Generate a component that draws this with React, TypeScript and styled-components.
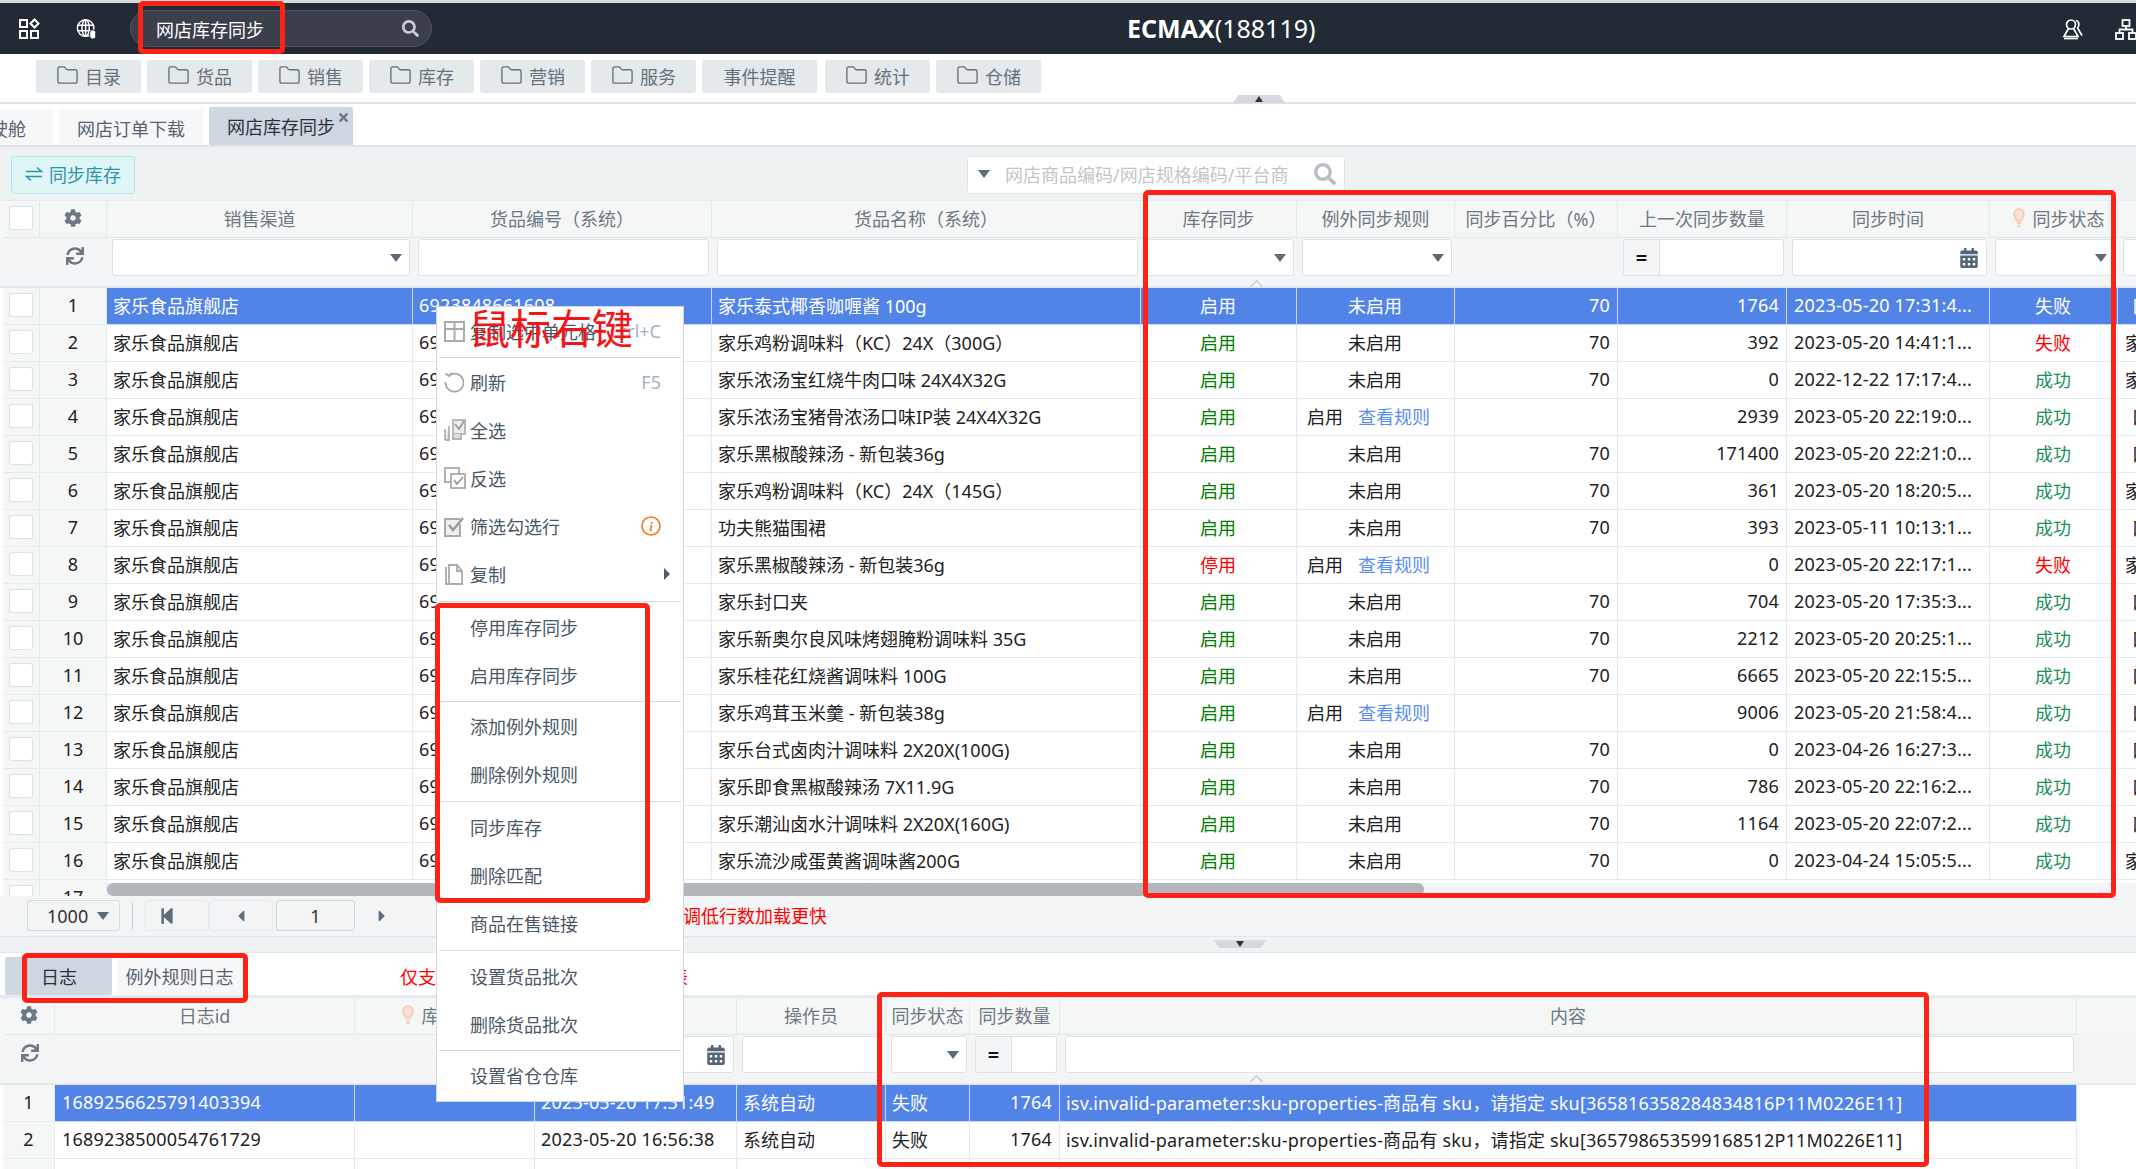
import styled, { createGlobalStyle } from "styled-components";
import { FaCog, FaSync, FaSearch, FaCalendarAlt, FaStepBackward, FaCaretLeft, FaCaretRight, FaTimes } from "react-icons/fa";
import { Folder } from "lucide-react";

const GlobalStyle = createGlobalStyle`
  html, body {
    margin: 0;
    padding: 0;
    background: #fff;
    overflow: hidden;
  }
  * {
    box-sizing: border-box;
  }
  body {
    font-family: "Noto Sans", "Noto Sans CJK SC", sans-serif;
    font-size: 18px;
    color: #222;
  }
`;

const MAIN_COLS = "37px 67px 306px 299px 429px 156px 158px 163px 169px 203px 128px 60px";
const LOG_COLS = "52px 300px 180px 202px 149px 84px 90px 1017px";

const Page = styled.div`
  position: relative;
  width: 2136px;
  height: 1169px;
  overflow: hidden;
`;

const TopBar = styled.header`
  height: 54px;
  border-top: 3px solid #d8dbdd;
  background: #222a35;
  color: #fff;
  display: flex;
  align-items: center;
  padding-left: 18px;
`;
const TopIcon = styled.div`
  width: 22px;
  height: 22px;
  margin-right: 36px;
  display: flex;
  align-items: center;
`;
const TopSearch = styled.div`
  width: 302px;
  height: 37px;
  margin-left: -4px;
  padding: 0 12px 0 25px;
  display: flex;
  align-items: center;
  justify-content: space-between;
  background: #3a3f4b;
  border: 1px solid #4d535f;
  border-radius: 19px;
  color: #c9ccd2;
`;
const TopSearchText = styled.span`
  color: #fff;
`;
const Title = styled.div`
  margin: -2px 0 0 695px;
  font-size: 25px;
  line-height: 30px;
  white-space: nowrap;
  b {
    font-weight: 700;
  }
`;
const TopRight = styled.div`
  margin-left: auto;
  display: flex;
  gap: 31px;
  margin-right: -1px;
`;

const NavBar = styled.nav`
  position: relative;
  height: 50px;
  padding: 6px 0 0 36px;
  display: flex;
  align-items: flex-start;
  gap: 6px;
  border-bottom: 2px solid #dfe4e8;
`;
const NavButton = styled.div<{ $wide?: boolean }>`
  height: 33px;
  width: ${(p) => (p.$wide ? "115px" : "105px")};
  margin-right: ${(p) => (p.$wide ? "2px" : "0")};
  padding-bottom: 2px;
  display: flex;
  align-items: center;
  justify-content: center;
  gap: 6px;
  background: #e4e9ec;
  border-radius: 3px;
  color: #66727d;
`;
const Handle = styled.div<{ $left: number; $top: number; $down?: boolean }>`
  position: absolute;
  left: ${(p) => p.$left}px;
  top: ${(p) => p.$top}px;
  width: 52px;
  height: 8px;
  background: #d5d9dd;
  clip-path: ${(p) =>
    p.$down ? "polygon(0 0, 100% 0, 90% 100%, 10% 100%)" : "polygon(10% 0, 90% 0, 100% 100%, 0 100%)"};
  display: flex;
  align-items: center;
  justify-content: center;
  &::after {
    content: "";
    border-left: 4px solid transparent;
    border-right: 4px solid transparent;
    ${(p) => (p.$down ? "border-top: 6px solid #333;" : "border-bottom: 6px solid #333;")}
  }
`;

const TabBar = styled.div`
  height: 43px;
  margin-left: -55px;
  padding-top: 6px;
  display: flex;
  align-items: flex-end;
  gap: 6px;
  border-bottom: 2px solid #dfe4e8;
`;
const Tab = styled.div<{ $active?: boolean; $pad?: number }>`
  position: relative;
  height: ${(p) => (p.$active ? "38px" : "35px")};
  padding: 0 ${(p) => p.$pad ?? 18}px;
  display: flex;
  align-items: center;
  background: ${(p) => (p.$active ? "#cfd7e0" : "#f6f7f8")};
  color: ${(p) => (p.$active ? "#2c3238" : "#58636d")};
  border-radius: ${(p) => (p.$active ? "2px 2px 0 0" : "0")};
`;
const TabClose = styled.span`
  position: absolute;
  top: 4px;
  right: 3px;
  font-size: 13px;
  line-height: 13px;
  color: #6d7984;
`;

const Toolbar = styled.div`
  height: 53px;
  padding: 9px 0 0 11px;
  display: flex;
  align-items: flex-start;
  background: #eff2f3;
`;
const SyncButton = styled.div`
  width: 124px;
  height: 38px;
  padding-bottom: 2px;
  display: flex;
  align-items: center;
  justify-content: center;
  gap: 6px;
  background: #dff6f6;
  border: 1px solid #b4e7e7;
  border-radius: 3px;
  color: #2f93a6;
`;
const SearchBox = styled.div`
  width: 378px;
  height: 38px;
  margin-left: 832px;
  padding: 0 8px 2px 10px;
  display: flex;
  align-items: center;
  background: #fff;
  border: 1px solid #e1e5e8;
  border-radius: 3px;
  color: #b9bec4;
`;
const SearchText = styled.span`
  margin-left: 15px;
  flex: 1;
  color: #c2c6ca;
  white-space: nowrap;
`;
const Caret = styled.i`
  display: block;
  width: 0;
  height: 0;
  flex: none;
  border-left: 6px solid transparent;
  border-right: 6px solid transparent;
  border-top: 8px solid #5d6b78;
`;

const Grid = styled.div<{ $cols: string }>`
  display: grid;
  grid-template-columns: ${(p) => p.$cols};
  padding-left: 3px;
  width: 2250px;
`;
const HeadRow = styled(Grid)<{ $h: number }>`
  height: ${(p) => p.$h}px;
  background: #f5f7f7;
  border-top: 1px solid #e3eaef;
  color: #6c7883;
`;
const HeadCell = styled.div<{ $shift?: number }>`
  display: flex;
  align-items: center;
  justify-content: center;
  gap: 8px;
  padding: 0 0 2px ${(p) => p.$shift ?? 0}px;
  border-right: 1px solid #e3eaef;
  border-bottom: 1px solid #dfe8ee;
  white-space: nowrap;
  overflow: hidden;
  color: #6c7883;
`;
const FilterRow = styled(Grid)<{ $h: number }>`
  height: ${(p) => p.$h}px;
  background: #f3f5f6;
  border-bottom: 1px solid #dfe4e8;
  box-shadow: inset 0 -3px 0 -2px #e6eaed;
`;
const FilterCell = styled.div`
  padding: 1px 3px 0 5px;
  display: flex;
  align-items: flex-start;
  justify-content: center;
  color: #6c7883;
`;
const FilterIconCell = styled(FilterCell)`
  padding-top: 9px;
`;
const FilterBox = styled.div`
  width: 100%;
  height: 37px;
  padding-right: 7px;
  display: flex;
  align-items: center;
  justify-content: flex-end;
  background: #fff;
  border: 1px solid #dde2e6;
  border-radius: 3px;
  color: #566779;
  overflow: hidden;
`;
const EqMark = styled.div`
  width: 36px;
  height: 100%;
  margin-right: auto;
  display: flex;
  align-items: center;
  justify-content: center;
  background: #f3f5f6;
  border-right: 1px solid #dde2e6;
  font-size: 20px;
  font-weight: 700;
  color: #111;
`;
const CollapseMark = styled.span<{ $left: number; $top: number }>`
  position: absolute;
  left: ${(p) => p.$left}px;
  top: ${(p) => p.$top}px;
  width: 9px;
  height: 9px;
  border-left: 1px solid #b6bcc2;
  border-top: 1px solid #b6bcc2;
  transform: rotate(45deg);
`;

const BodyArea = styled.div`
  position: relative;
  height: 608px;
  overflow: hidden;
  background: #fff;
`;
const DataRow = styled(Grid)`
  height: 37px;
`;
const SideCell = styled.div`
  display: flex;
  align-items: center;
  justify-content: center;
  padding-bottom: 2px;
  background: #f5f7f7;
  border-right: 1px solid #e3ebf2;
  border-bottom: 1px solid #e3ebf2;
  color: #222;
`;
const Cell = styled.div<{ $align?: string; $color?: string; $sel?: boolean; $indent?: number; $num?: boolean }>`
  display: flex;
  align-items: center;
  justify-content: ${(p) => p.$align ?? "flex-start"};
  padding: 0 7px 2px ${(p) => p.$indent ?? 6}px;
  white-space: nowrap;
  overflow: hidden;
  letter-spacing: ${(p) => (p.$num ? "0.18px" : "0")};
  background: ${(p) => (p.$sel ? "#5284e8" : "#fff")};
  color: ${(p) => (p.$sel ? "#fff" : p.$color ?? "#222")};
  border-right: 1px solid ${(p) => (p.$sel ? "#c8d8f6" : "#e3ebf2")};
  border-bottom: 1px solid ${(p) => (p.$sel ? "#c8d8f6" : "#e3ebf2")};
`;
const RuleLink = styled.span`
  margin-left: 15px;
  color: #5b8def;
`;
const CheckBox = styled.div`
  width: 24px;
  height: 24px;
  background: #fff;
  border: 1px solid #dfe3e6;
  border-radius: 3px;
  box-shadow: 0 0 1px #d3d7da;
`;
const ScrollThumb = styled.div`
  position: absolute;
  left: 107px;
  bottom: 0;
  width: 1317px;
  height: 13px;
  background: #b4b6be;
  border-radius: 6px;
`;
const ScrollTrack = styled.div`
  position: absolute;
  left: 107px;
  right: 0;
  bottom: 0;
  height: 13px;
  background: #f2f4f5;
`;

const Pager = styled.div`
  height: 41px;
  padding: 4px 0 0 27px;
  display: flex;
  align-items: flex-start;
  background: #f2f4f6;
  border-bottom: 1px solid #dfe7ee;
  color: #333;
`;
const PageSelect = styled.div`
  width: 93px;
  height: 31px;
  padding-left: 19px;
  display: flex;
  align-items: center;
  gap: 9px;
  background: #f3f5f5;
  border: 1px solid #d3dadd;
  border-radius: 3px;
`;
const PageSep = styled.div`
  width: 1px;
  height: 26px;
  margin: 3px 12px 0;
  background: #c6cdd2;
`;
const PageButton = styled.div<{ $plain?: boolean; $end?: number }>`
  width: 64px;
  height: 31px;
  padding-right: ${(p) => p.$end ?? 0}px;
  display: flex;
  align-items: center;
  justify-content: center;
  color: #5d6d7e;
  border: 1px solid ${(p) => (p.$plain ? "transparent" : "#e6eaec")};
  border-radius: 3px;
`;
const PageInput = styled.div`
  width: 79px;
  height: 31px;
  margin-left: 3px;
  display: flex;
  align-items: center;
  justify-content: center;
  background: #f3f5f5;
  border: 1px solid #cdd6da;
  border-radius: 3px;
`;
const RedNote = styled.span<{ $left: number }>`
  margin-left: ${(p) => p.$left}px;
  color: #f00;
  white-space: nowrap;
`;
const PagerNote = styled(RedNote)`
  line-height: 33px;
`;

const Splitter = styled.div`
  height: 16px;
  background: #eff2f3;
  border-bottom: 1px solid #e3e8ec;
`;

const LogTabs = styled.div`
  height: 44px;
  padding: 4px 0 0 5px;
  display: flex;
  align-items: stretch;
  border-bottom: 2px solid #e7eaef;
`;
const LogTab = styled.div<{ $active?: boolean; $w: number }>`
  width: ${(p) => p.$w}px;
  margin-right: 6px;
  display: flex;
  align-items: center;
  justify-content: ${(p) => (p.$active ? "flex-start" : "center")};
  padding: ${(p) => (p.$active ? "0 0 0 36px" : "0 4px 0 0")};
  background: ${(p) => (p.$active ? "#cfd7e0" : "#f6f7f8")};
  color: ${(p) => (p.$active ? "#2c3238" : "#58636d")};
  border-radius: 2px;
`;
const LogNote = styled(RedNote)`
  align-self: center;
`;
const LogBlank = styled.div`
  background: #fff;
`;

const Menu = styled.div`
  position: absolute;
  left: 436px;
  top: 306px;
  width: 248px;
  padding: 1px 0;
  background: #fff;
  border: 1px solid #cfd8dc;
  color: #4a5866;
`;
const MenuItem = styled.div`
  height: 48px;
  padding: 0 22px 2px 7px;
  display: flex;
  align-items: center;
`;
const MenuIcon = styled.div`
  width: 26px;
  flex: none;
  display: flex;
  align-items: center;
`;
const MenuLabel = styled.span`
  flex: 1;
  white-space: nowrap;
`;
const MenuKey = styled.span`
  color: #a4b2be;
`;
const MenuLine = styled.div<{ $space: number }>`
  height: 1px;
  margin: ${(p) => p.$space}px 2px;
  background: #d3dbdf;
`;
const MenuArrow = styled.i`
  width: 0;
  height: 0;
  margin-right: -9px;
  border-top: 6px solid transparent;
  border-bottom: 6px solid transparent;
  border-left: 6px solid #4a5a78;
`;

const RedBox = styled.div<{ $x: number; $y: number; $w: number; $h: number }>`
  position: absolute;
  left: ${(p) => p.$x}px;
  top: ${(p) => p.$y}px;
  width: ${(p) => p.$w}px;
  height: ${(p) => p.$h}px;
  border: 5px solid #ff2216;
  border-radius: 5px;
  pointer-events: none;
`;
const BigRedText = styled.div`
  position: absolute;
  left: 469px;
  top: 296px;
  font-family: "Noto Sans CJK SC", sans-serif;
  font-size: 41px;
  line-height: 60px;
  color: #f5141a;
`;

const GridIcon = () => (
  <svg width="22" height="22" viewBox="0 0 22 22" fill="none" stroke="#fff" strokeWidth="2">
    <rect x="2" y="2" width="7" height="7" />
    <rect x="2" y="13" width="7" height="7" />
    <rect x="13" y="13" width="7" height="7" />
    <path d="M16.5 1.5l4 4-4 4-4-4z" />
  </svg>
);
const GlobeIcon = () => (
  <svg width="24" height="24" viewBox="0 0 24 24" fill="none" stroke="#fff" strokeWidth="1.6">
    <circle cx="10.5" cy="11" r="9" />
    <ellipse cx="10.5" cy="11" rx="4" ry="9" />
    <path d="M2 8h17M2 14h17M10.5 2v18" />
    <rect x="15" y="13" width="6.5" height="10" rx="3" fill="#fff" stroke="#222a35" strokeWidth="1" />
  </svg>
);
const UsersIcon = () => (
  <svg width="22" height="22" viewBox="0 0 22 22" fill="none" stroke="#fff" strokeWidth="1.7">
    <circle cx="9" cy="6.5" r="4.5" />
    <path d="M6.5 10.5L2 18.5h14l-4.5-8" />
    <path d="M14 2.5c3 .5 4 5 1.5 7.5l4.5 7.5" />
    <path d="M2 20.5h14" />
  </svg>
);
const NetIcon = () => (
  <svg width="22" height="22" viewBox="0 0 22 22" fill="none" stroke="#fff" strokeWidth="1.8" style={{ flex: "none" }}>
    <rect x="7.5" y="2" width="7" height="6" />
    <rect x="1" y="15" width="7" height="6" />
    <rect x="14" y="15" width="7" height="6" />
    <path d="M11 8v3.5M4.5 15v-3.5h13V15" />
  </svg>
);
const SwapIcon = () => (
  <svg width="18" height="16" viewBox="0 0 18 16" fill="none" stroke="#2f93a6" strokeWidth="1.6">
    <path d="M1 5.5h15.5L12 1.5" />
    <path d="M17 10.5H1.5l4.5 4" />
  </svg>
);
const Bulb = () => (
  <svg width="12" height="20" viewBox="0 0 12 20" fill="#fbe3d6" stroke="#f8c4a6" strokeWidth="1.4">
    <path d="M6 1a5 5 0 0 0-5 5c0 2.4 2 3.6 2.4 6.5h5.2C9 9.6 11 8.400 11 6a5 5 0 0 0-5-5z" />
    <path d="M4 15h4M4.500 18h3" />
  </svg>
);
const TableGlyph = () => (
  <svg width="21" height="21" viewBox="0 0 21 21" fill="none" stroke="#aaa" strokeWidth="2">
    <rect x="1" y="1" width="19" height="19" />
    <path d="M1 8h19M10.500 1v19" />
  </svg>
);
const ReloadGlyph = () => (
  <svg width="20" height="22" viewBox="0 0 20 22" fill="none" stroke="#aaa" strokeWidth="1.800">
    <path d="M5 4.500A9 9 0 1 1 1.500 11" />
    <path d="M1.500 2.500L5 5l3-3" fill="none" />
  </svg>
);
const AllGlyph = () => (
  <svg width="22" height="22" viewBox="0 0 22 22" fill="none" stroke="#b2b2b2" strokeWidth="1.800">
    <path d="M1 10v11M5 7v14h-4" fill="#ddd" />
    <rect x="9" y="1" width="12" height="14" fill="#eee" />
    <path d="M9 15v5h8v-5" fill="#ddd" />
    <path d="M11 5l4 5 5-8" stroke="#999" />
  </svg>
);
const InvertGlyph = () => (
  <svg width="22" height="22" viewBox="0 0 22 22" fill="none" stroke="#aaa" strokeWidth="1.800">
    <rect x="1" y="1" width="14" height="14" />
    <rect x="7" y="7" width="14" height="14" fill="#fff" />
    <path d="M10 13l3 4 6-7" stroke="#999" />
  </svg>
);
const CheckGlyph = () => (
  <svg width="21" height="21" viewBox="0 0 21 21" fill="none" stroke="#aaa" strokeWidth="2">
    <path d="M16 8v12H1V3h15" fill="#eee" />
    <path d="M5 9l4 5 10-12" stroke="#999" strokeWidth="2.400" />
  </svg>
);
const DocGlyph = () => (
  <svg width="20" height="21" viewBox="0 0 20 21" fill="none" stroke="#aaa" strokeWidth="1.800">
    <path d="M2 3v17h3" />
    <path d="M5 1h8l5 6v13H5z" fill="#fff" />
    <path d="M13 1v6h5" />
  </svg>
);
const InfoGlyph = () => (
  <svg width="20" height="20" viewBox="0 0 20 20">
    <circle cx="10" cy="10" r="9" fill="none" stroke="#f57a1a" strokeWidth="1.600" />
    <text x="10" y="15" textAnchor="middle" fontSize="13" fontWeight="700" fontStyle="italic" fontFamily="Liberation Serif, serif" fill="#f57a1a">
      i
    </text>
  </svg>
);

type Row = {
  name: string;
  sync?: boolean;
  rule?: boolean;
  qty: string;
  time: string;
  ok: boolean;
  tail: boolean;
};

const rows: Row[] = [
  { name: "家乐泰式椰香咖喱酱 100g", qty: "1764", time: "2023-05-20 17:31:4...", ok: false, tail: false },
  { name: "家乐鸡粉调味料（KC）24X（300G）", qty: "392", time: "2023-05-20 14:41:1...", ok: false, tail: true },
  { name: "家乐浓汤宝红烧牛肉口味 24X4X32G", qty: "0", time: "2022-12-22 17:17:4...", ok: true, tail: true },
  { name: "家乐浓汤宝猪骨浓汤口味IP装 24X4X32G", rule: true, qty: "2939", time: "2023-05-20 22:19:0...", ok: true, tail: false },
  { name: "家乐黑椒酸辣汤 - 新包装36g", qty: "171400", time: "2023-05-20 22:21:0...", ok: true, tail: false },
  { name: "家乐鸡粉调味料（KC）24X（145G）", qty: "361", time: "2023-05-20 18:20:5...", ok: true, tail: true },
  { name: "功夫熊猫围裙", qty: "393", time: "2023-05-11 10:13:1...", ok: true, tail: false },
  { name: "家乐黑椒酸辣汤 - 新包装36g", sync: false, rule: true, qty: "0", time: "2023-05-20 22:17:1...", ok: false, tail: true },
  { name: "家乐封口夹", qty: "704", time: "2023-05-20 17:35:3...", ok: true, tail: false },
  { name: "家乐新奥尔良风味烤翅腌粉调味料 35G", qty: "2212", time: "2023-05-20 20:25:1...", ok: true, tail: false },
  { name: "家乐桂花红烧酱调味料 100G", qty: "6665", time: "2023-05-20 22:15:5...", ok: true, tail: false },
  { name: "家乐鸡茸玉米羹 - 新包装38g", rule: true, qty: "9006", time: "2023-05-20 21:58:4...", ok: true, tail: false },
  { name: "家乐台式卤肉汁调味料 2X20X(100G)", qty: "0", time: "2023-04-26 16:27:3...", ok: true, tail: false },
  { name: "家乐即食黑椒酸辣汤 7X11.9G", qty: "786", time: "2023-05-20 22:16:2...", ok: true, tail: false },
  { name: "家乐潮汕卤水汁调味料 2X20X(160G)", qty: "1164", time: "2023-05-20 22:07:2...", ok: true, tail: false },
  { name: "家乐流沙咸蛋黄酱调味酱200G", qty: "0", time: "2023-04-24 15:05:5...", ok: true, tail: true },
];

const logs = [
  {
    id: "1689256625791403394",
    time: "2023-05-20 17:31:49",
    text: "isv.invalid-parameter:sku-properties-商品有 sku，请指定 sku[365816358284834816P11M0226E11]",
  },
  {
    id: "1689238500054761729",
    time: "2023-05-20 16:56:38",
    text: "isv.invalid-parameter:sku-properties-商品有 sku，请指定 sku[365798653599168512P11M0226E11]",
  },
];

const navItems = ["目录", "货品", "销售", "库存", "营销", "服务"];

export default function App() {
  return (
    <Page>
      <GlobalStyle />
      <TopBar>
        <TopIcon><GridIcon /></TopIcon>
        <TopIcon><GlobeIcon /></TopIcon>
        <TopSearch>
          <TopSearchText>网店库存同步</TopSearchText>
          <FaSearch size={17} />
        </TopSearch>
        <Title>
          <b>ECMAX</b>(188119)
        </Title>
        <TopRight>
          <UsersIcon />
          <NetIcon />
        </TopRight>
      </TopBar>

      <NavBar>
        {navItems.map((n) => (
          <NavButton key={n}>
            <Folder size={23} strokeWidth={1.4} />
            {n}
          </NavButton>
        ))}
        <NavButton $wide>事件提醒</NavButton>
        <NavButton>
          <Folder size={23} strokeWidth={1.4} />
          统计
        </NavButton>
        <NavButton>
          <Folder size={23} strokeWidth={1.4} />
          仓储
        </NavButton>
        <Handle $left={1233} $top={41} />
      </NavBar>

      <TabBar>
        <Tab $pad={27}>驾驶舱</Tab>
        <Tab>网店订单下载</Tab>
        <Tab $active>
          网店库存同步
          <TabClose><FaTimes /></TabClose>
        </Tab>
      </TabBar>

      <Toolbar>
        <SyncButton>
          <SwapIcon />
          同步库存
        </SyncButton>
        <SearchBox>
          <Caret />
          <SearchText>网店商品编码/网店规格编码/平台商</SearchText>
          <FaSearch size={22} />
        </SearchBox>
      </Toolbar>

      <HeadRow $cols={MAIN_COLS} $h={38}>
        <HeadCell><CheckBox /></HeadCell>
        <HeadCell><FaCog size={18} /></HeadCell>
        <HeadCell>销售渠道</HeadCell>
        <HeadCell>货品编号（系统）</HeadCell>
        <HeadCell>货品名称（系统）</HeadCell>
        <HeadCell>库存同步</HeadCell>
        <HeadCell>例外同步规则</HeadCell>
        <HeadCell>同步百分比（%）</HeadCell>
        <HeadCell>上一次同步数量</HeadCell>
        <HeadCell>同步时间</HeadCell>
        <HeadCell $shift={10}><Bulb />同步状态</HeadCell>
        <HeadCell />
      </HeadRow>
      <FilterRow $cols={MAIN_COLS} $h={50}>
        <FilterCell />
        <FilterIconCell><FaSync size={18} /></FilterIconCell>
        <FilterCell><FilterBox><Caret /></FilterBox></FilterCell>
        <FilterCell><FilterBox /></FilterCell>
        <FilterCell><FilterBox /></FilterCell>
        <FilterCell><FilterBox><Caret /></FilterBox></FilterCell>
        <FilterCell><FilterBox><Caret /></FilterBox></FilterCell>
        <FilterCell />
        <FilterCell><FilterBox><EqMark>=</EqMark></FilterBox></FilterCell>
        <FilterCell><FilterBox><FaCalendarAlt size={20} /></FilterBox></FilterCell>
        <FilterCell><FilterBox><Caret /></FilterBox></FilterCell>
        <FilterCell><FilterBox /></FilterCell>
      </FilterRow>
      <CollapseMark $left={1252} $top={282} />

      <BodyArea>
        {rows.map((r, i) => {
          const sel = i === 0;
          const active = r.sync !== false;
          return (
            <DataRow $cols={MAIN_COLS} key={i}>
              <SideCell><CheckBox /></SideCell>
              <SideCell>{i + 1}</SideCell>
              <Cell $sel={sel}>家乐食品旗舰店</Cell>
              <Cell $sel={sel} $num>6923848661608</Cell>
              <Cell $sel={sel}>{r.name}</Cell>
              <Cell $sel={sel} $align="center" $color={active ? "#008000" : "#f00"}>
                {active ? "启用" : "停用"}
              </Cell>
              {r.rule ? (
                <Cell $sel={sel} $indent={10}>
                  启用<RuleLink>查看规则</RuleLink>
                </Cell>
              ) : (
                <Cell $sel={sel} $align="center">未启用</Cell>
              )}
              <Cell $sel={sel} $align="flex-end" $num>{r.rule ? "" : "70"}</Cell>
              <Cell $sel={sel} $align="flex-end" $num>{r.qty}</Cell>
              <Cell $sel={sel} $num $indent={7}>{r.time}</Cell>
              <Cell $sel={sel} $align="center" $color={r.ok ? "#1a8f5a" : "#f00"}>
                {r.ok ? "成功" : "失败"}
              </Cell>
              <Cell $sel={sel} $indent={r.tail ? 7 : 14}>{r.tail ? "家乐" : "口"}</Cell>
            </DataRow>
          );
        })}
        <DataRow $cols={MAIN_COLS}>
          <SideCell><CheckBox /></SideCell>
          <SideCell>17</SideCell>
        </DataRow>
        <ScrollTrack />
        <ScrollThumb />
      </BodyArea>

      <Pager>
        <PageSelect>1000<Caret /></PageSelect>
        <PageSep />
        <PageButton $end={20}><FaStepBackward size={18} /></PageButton>
        <PageButton><FaCaretLeft size={18} /></PageButton>
        <PageInput>1</PageInput>
        <PageButton $plain $end={10}><FaCaretRight size={18} /></PageButton>
        <PagerNote $left={264}>调低行数加载更快</PagerNote>
      </Pager>
      <Splitter />
      <Handle $left={1214} $top={940} $down />

      <LogTabs>
        <LogTab $active $w={107}>日志</LogTab>
        <LogTab $w={127}>例外规则日志</LogTab>
        <LogNote $left={149}>仅支持查询近期的库存同步日志列表</LogNote>
      </LogTabs>

      <HeadRow $cols={LOG_COLS} $h={38}>
        <HeadCell><FaCog size={18} /></HeadCell>
        <HeadCell>日志id</HeadCell>
        <HeadCell $shift={6}><Bulb />库存同步</HeadCell>
        <HeadCell />
        <HeadCell>操作员</HeadCell>
        <HeadCell>同步状态</HeadCell>
        <HeadCell>同步数量</HeadCell>
        <HeadCell>内容</HeadCell>
      </HeadRow>
      <FilterRow $cols={LOG_COLS} $h={50}>
        <FilterIconCell><FaSync size={18} /></FilterIconCell>
        <FilterCell />
        <FilterCell />
        <FilterCell><FilterBox><FaCalendarAlt size={20} /></FilterBox></FilterCell>
        <FilterCell><FilterBox /></FilterCell>
        <FilterCell><FilterBox><Caret /></FilterBox></FilterCell>
        <FilterCell><FilterBox><EqMark>=</EqMark></FilterBox></FilterCell>
        <FilterCell><FilterBox /></FilterCell>
      </FilterRow>
      <CollapseMark $left={1252} $top={1077} />

      {logs.map((l, i) => {
        const sel = i === 0;
        return (
          <DataRow $cols={LOG_COLS} key={l.id}>
            <SideCell>{i + 1}</SideCell>
            <Cell $sel={sel} $num $indent={7}>{l.id}</Cell>
            <Cell $sel={sel} />
            <Cell $sel={sel} $num>{l.time}</Cell>
            <Cell $sel={sel}>系统自动</Cell>
            <Cell $sel={sel}>失败</Cell>
            <Cell $sel={sel} $align="flex-end" $num>1764</Cell>
            <Cell $sel={sel} $num>{l.text}</Cell>
          </DataRow>
        );
      })}
      <DataRow $cols={LOG_COLS}>
        <SideCell />
        <Cell /><Cell /><Cell /><Cell /><Cell /><Cell /><Cell />
        <LogBlank />
      </DataRow>

      <Menu>
        <MenuItem>
          <MenuIcon><TableGlyph /></MenuIcon>
          <MenuLabel>复制选中单元格</MenuLabel>
          <MenuKey>Ctrl+C</MenuKey>
        </MenuItem>
        <MenuLine $space={1} />
        <MenuItem>
          <MenuIcon><ReloadGlyph /></MenuIcon>
          <MenuLabel>刷新</MenuLabel>
          <MenuKey>F5</MenuKey>
        </MenuItem>
        <MenuItem><MenuIcon><AllGlyph /></MenuIcon><MenuLabel>全选</MenuLabel></MenuItem>
        <MenuItem><MenuIcon><InvertGlyph /></MenuIcon><MenuLabel>反选</MenuLabel></MenuItem>
        <MenuItem>
          <MenuIcon><CheckGlyph /></MenuIcon>
          <MenuLabel>筛选勾选行</MenuLabel>
          <InfoGlyph />
        </MenuItem>
        <MenuItem>
          <MenuIcon><DocGlyph /></MenuIcon>
          <MenuLabel>复制</MenuLabel>
          <MenuArrow />
        </MenuItem>
        <MenuLine $space={2} />
        <MenuItem><MenuIcon /><MenuLabel>停用库存同步</MenuLabel></MenuItem>
        <MenuItem><MenuIcon /><MenuLabel>启用库存同步</MenuLabel></MenuItem>
        <MenuLine $space={1} />
        <MenuItem><MenuIcon /><MenuLabel>添加例外规则</MenuLabel></MenuItem>
        <MenuItem><MenuIcon /><MenuLabel>删除例外规则</MenuLabel></MenuItem>
        <MenuLine $space={2} />
        <MenuItem><MenuIcon /><MenuLabel>同步库存</MenuLabel></MenuItem>
        <MenuItem><MenuIcon /><MenuLabel>删除匹配</MenuLabel></MenuItem>
        <MenuItem><MenuIcon /><MenuLabel>商品在售链接</MenuLabel></MenuItem>
        <MenuLine $space={2} />
        <MenuItem><MenuIcon /><MenuLabel>设置货品批次</MenuLabel></MenuItem>
        <MenuItem><MenuIcon /><MenuLabel>删除货品批次</MenuLabel></MenuItem>
        <MenuLine $space={1} />
        <MenuItem><MenuIcon /><MenuLabel>设置省仓仓库</MenuLabel></MenuItem>
      </Menu>

      <BigRedText>鼠标右键</BigRedText>
      <RedBox $x={138} $y={1} $w={147} $h={53} />
      <RedBox $x={1143} $y={190} $w={973} $h={708} />
      <RedBox $x={435} $y={603} $w={215} $h={300} />
      <RedBox $x={22} $y={953} $w={226} $h={50} />
      <RedBox $x={877} $y={992} $w={1052} $h={175} />
    </Page>
  );
}
